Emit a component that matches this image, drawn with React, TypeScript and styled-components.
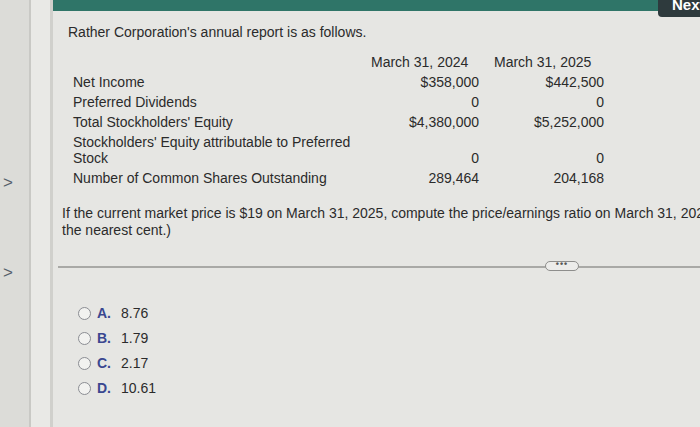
import styled, { createGlobalStyle } from 'styled-components'

const GlobalStyle = createGlobalStyle`
  html, body {
    margin: 0;
    padding: 0;
    background: #e6e6e3;
    font-family: "Liberation Sans", Arial, sans-serif;
    color: #2b2b2b;
  }
`

const Page = styled.div`
  display: flex;
  width: 700px;
  height: 427px;
  overflow: hidden;
`

const Sidebar = styled.div`
  width: 31px;
  flex: none;
  background: #dcdcd8;
  border-right: 2px solid #c9c9c5;
  display: flex;
  flex-direction: column;
  padding-top: 173px;
  gap: 70px;
  box-sizing: border-box;
`

const Chevron = styled.span`
  font-size: 17px;
  color: #55606a;
  padding-left: 3px;
  line-height: 20px;
`

const Rail = styled.div`
  width: 19px;
  flex: none;
  background: #e9e9e6;
  border-right: 3px solid #d0d0cc;
`

const Main = styled.div`
  flex: 1;
  min-width: 0;
  overflow: hidden;
  position: relative;
  display: flex;
  flex-direction: column;
`

const TopBar = styled.div`
  height: 11px;
  background: #2f7568;
`

const NextButton = styled.div`
  position: absolute;
  z-index: 2;
  top: 0;
  right: 0;
  width: 42px;
  height: 17px;
  background: #2e3a3d;
  border-bottom-left-radius: 4px;
  color: #fff;
  font-weight: bold;
  font-size: 15px;
  line-height: 9px;
  padding-left: 14px;
  box-sizing: border-box;
  overflow: hidden;
  white-space: nowrap;
`

const Title = styled.p`
  margin: 13px 0 0 15px;
  font-size: 14px;
  line-height: 16px;
`

const Table = styled.div`
  display: grid;
  grid-template-columns: 298px 108px 125px;
  margin: 12px 0 0 20px;
  font-size: 14px;
  line-height: 16px;
`

const Cell = styled.div<{ $align?: 'left' | 'right'; $indent?: number }>`
  padding: 2px 0 2px ${p => p.$indent ?? 0}px;
  text-align: ${p => p.$align ?? 'left'};
  align-self: end;
`

const Question = styled.p`
  margin: 17px 0 0 9px;
  font-size: 14px;
  line-height: 17px;
  white-space: nowrap;
`

const Divider = styled.div`
  position: relative;
  margin: 27px 0 0 5px;
  height: 2px;
  background: #a9a9a6;
`

const Dots = styled.span`
  position: absolute;
  left: 487px;
  top: -5px;
  width: 34px;
  height: 10px;
  box-sizing: border-box;
  border: 1.5px solid #8e8e8c;
  border-radius: 6px;
  background: #ececea;
  font-size: 9px;
  line-height: 4px;
  text-align: center;
  color: #555;
  letter-spacing: 1px;
  font-weight: bold;
`

const Options = styled.div`
  display: flex;
  flex-direction: column;
  gap: 7px;
  margin: 36px 0 0 25px;
`

const Option = styled.label`
  display: flex;
  align-items: center;
  height: 18px;
  font-size: 14px;
`

const Radio = styled.span`
  width: 11px;
  height: 11px;
  border: 1.5px solid #8b8d93;
  border-radius: 50%;
  background: #f2f2f0;
  margin-right: 6px;
`

const Letter = styled.span`
  color: #3a4790;
  font-weight: bold;
  width: 24px;
`

const rows: [string, string, string][] = [
  ['Net Income', '$358,000', '$442,500'],
  ['Preferred Dividends', '0', '0'],
  ["Total Stockholders' Equity", '$4,380,000', '$5,252,000'],
  ["Stockholders' Equity attributable to Preferred Stock", '0', '0'],
  ['Number of Common Shares Outstanding', '289,464', '204,168'],
]

const choices = [
  ['A.', '8.76'],
  ['B.', '1.79'],
  ['C.', '2.17'],
  ['D.', '10.61'],
]

export default function App() {
  return (
    <>
      <GlobalStyle />
      <Page>
        <Sidebar>
          <Chevron>&gt;</Chevron>
          <Chevron>&gt;</Chevron>
        </Sidebar>
        <Rail />
        <Main>
          <TopBar />
          <NextButton>Next</NextButton>
          <Title>Rather Corporation's annual report is as follows.</Title>
          <Table>
            <Cell />
            <Cell>March 31, 2024</Cell>
            <Cell $indent={15}>March 31, 2025</Cell>
            {rows.map(([label, a, b]) => [
              <Cell key={label + '-l'}>{label}</Cell>,
              <Cell key={label + '-a'} $align="right">{a}</Cell>,
              <Cell key={label + '-b'} $align="right">{b}</Cell>,
            ])}
          </Table>
          <Question>
            If the current market price is $19 on March 31, 2025, compute the price/earnings ratio on March 31, 2025. (Round your answer to
            <br />
            the nearest cent.)
          </Question>
          <Divider>
            <Dots>•••</Dots>
          </Divider>
          <Options>
            {choices.map(([l, v]) => (
              <Option key={l}>
                <Radio />
                <Letter>{l}</Letter>
                {v}
              </Option>
            ))}
          </Options>
        </Main>
      </Page>
    </>
  )
}
